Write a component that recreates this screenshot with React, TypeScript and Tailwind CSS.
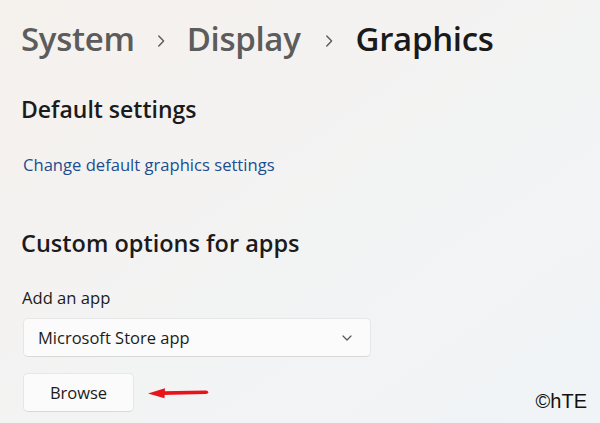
import React from 'react';

function Chevron({ className }: { className?: string }) {
  return (
    <svg className={className} width="8" height="12" viewBox="0 0 8 12" fill="none">
      <path d="M1.8 1 L6.6 6 L1.8 11" stroke="#5a5a5a" strokeWidth="1.4" strokeLinecap="round" strokeLinejoin="round" />
    </svg>
  );
}

function ArrowLeft() {
  return (
    <svg width="62" height="12" viewBox="0 0 62 12" className="ml-[13px]">
      <path d="M15 4.2 L59 3.4 Q61.2 3.5 61.2 5.3 Q61.2 7 59 7.1 L15 8 Z" fill="#e8141b" />
      <path d="M1 6.4 L18 1.2 L17.5 11.2 Z" fill="#e8141b" />
    </svg>
  );
}

export default function App() {
  return (
    <div
      className="w-[600px] h-[423px] overflow-hidden bg-gradient-to-br from-[#f5f1ed] via-[#f3f3f3] to-[#f0f4f7] text-[#1b1b1b]"
      style={{ fontFamily: '"Open Sans", "Noto Sans", sans-serif' }}
    >
      <div className="pl-[21px] pt-[19px]">
        <div className="flex items-center h-[40px] text-[33px] leading-[40px] font-semibold tracking-[-0.3px]">
          <span className="text-[#5c5c5c]">System</span>
          <Chevron className="ml-[22px] mr-[22px] mt-[4px]" />
          <span className="text-[#5c5c5c]">Display</span>
          <Chevron className="ml-[24px] mr-[23px] mt-[4px]" />
          <span className="text-[#1a1a1a]">Graphics</span>
        </div>

        <h2 className="mt-[35px] text-[23px] leading-[30px] font-semibold">Default settings</h2>

        <a className="block mt-[30px] ml-[2px] text-[16.6px] leading-[22px] text-[#1c4d8f]">
          Change default graphics settings
        </a>

        <h2 className="mt-[52px] text-[23.5px] leading-[30px] font-semibold">Custom options for apps</h2>

        <div className="mt-[29px] ml-[1px] text-[16.6px] leading-[22px]">Add an app</div>

        <div className="mt-[9px] ml-[2px] w-[348px] h-[39px] flex items-center justify-between pl-[14px] pr-[18px] bg-[#fbfbfb] border border-[#e6e6e6] border-b-[#d8d8d8] rounded-[5px] text-[16.5px] leading-[22px]">
          <span>Microsoft Store app</span>
          <svg width="10" height="6" viewBox="0 0 10 6" fill="none">
            <path d="M1 1 L5 5 L9 1" stroke="#555" strokeWidth="1.2" strokeLinecap="round" strokeLinejoin="round" />
          </svg>
        </div>

        <div className="mt-[16px] flex items-start">
          <button className="ml-[2px] w-[111px] h-[39px] flex items-center justify-center bg-[#fbfbfb] border border-[#e6e6e6] border-b-[#d8d8d8] rounded-[5px] text-[16.5px] leading-[22px]">
            Browse
          </button>
          <div className="h-[39px] flex items-center">
            <ArrowLeft />
          </div>
          <span
            className="ml-auto mr-[13px] mt-[16px] text-[20px] leading-[24px] text-[#111]"
            style={{ fontFamily: '"Liberation Sans", Arial, sans-serif' }}
          >
            ©hTE
          </span>
        </div>
      </div>
    </div>
  );
}
